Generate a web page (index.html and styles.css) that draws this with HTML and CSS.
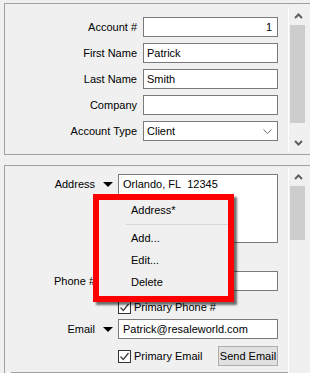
FILE: index.html
```html
<!DOCTYPE html>
<html>
<head>
<meta charset="utf-8">
<link rel="stylesheet" href="styles.css">
</head>
<body>
<div class="panel panel-top">
  <div class="form">
    <label class="lbl">Account #</label>
    <div class="field num">1</div>
    <label class="lbl">First Name</label>
    <div class="field">Patrick</div>
    <label class="lbl">Last Name</label>
    <div class="field">Smith</div>
    <label class="lbl">Company</label>
    <div class="field"></div>
    <label class="lbl">Account Type</label>
    <div class="field combo"><span>Client</span>
      <svg class="combo-arrow" width="9" height="5" viewBox="0 0 9 5"><path d="M0.5 0.5 L4.5 4.5 L8.5 0.5" fill="none" stroke="#6d6d6d" stroke-width="1"/></svg>
    </div>
  </div>
  <div class="vscroll vscroll-top">
    <div class="sbtn"><svg width="9" height="6" viewBox="0 0 9 6"><path d="M1 5 L4.5 1.5 L8 5" fill="none" stroke="#606060" stroke-width="2"/></svg></div>
    <div class="thumb thumb-top"></div>
    <div class="track"></div>
    <div class="sbtn"><svg width="9" height="6" viewBox="0 0 9 6"><path d="M1 1 L4.5 4.5 L8 1" fill="none" stroke="#606060" stroke-width="2"/></svg></div>
  </div>
</div>

<div class="panel panel-bottom">
  <div class="form2">
    <div class="row row-address">
      <span class="lbl2">Address</span>
      <span class="drop"></span>
      <div class="area">Orlando, FL&nbsp; 12345</div>
    </div>
    <div class="row row-phone">
      <span class="lbl2">Phone #</span>
      <span class="drop"></span>
      <div class="field2"></div>
    </div>
    <div class="row row-check1">
      <span class="lbl2"></span>
      <span class="spacer"></span>
      <label class="check"><span class="box"><svg width="11" height="11" viewBox="0 0 11 11"><path d="M1.5 5.5 L4.3 8.5 L9.5 2" fill="none" stroke="#404040" stroke-width="1.3"/></svg></span>Primary Phone #</label>
    </div>
    <div class="row row-email">
      <span class="lbl2">Email</span>
      <span class="drop"></span>
      <div class="field2">Patrick@resaleworld.com</div>
    </div>
    <div class="row row-check2">
      <span class="lbl2"></span>
      <span class="spacer"></span>
      <label class="check"><span class="box"><svg width="11" height="11" viewBox="0 0 11 11"><path d="M1.5 5.5 L4.3 8.5 L9.5 2" fill="none" stroke="#404040" stroke-width="1.3"/></svg></span>Primary Email</label>
      <button class="btn">Send Email</button>
    </div>
    <div class="bottom-line"></div>
  </div>
  <div class="vscroll vscroll-bottom">
    <div class="sbtn"><svg width="9" height="6" viewBox="0 0 9 6"><path d="M1 5 L4.5 1.5 L8 5" fill="none" stroke="#606060" stroke-width="2"/></svg></div>
    <div class="thumb thumb-bottom"></div>
    <div class="track"></div>
  </div>

  <div class="menu">
    <div class="menu-inner">
      <div class="mi">Address*</div>
      <div class="msep"></div>
      <div class="mi">Add...</div>
      <div class="mi">Edit...</div>
      <div class="mi">Delete</div>
    </div>
  </div>
</div>
</body>
</html>
```
FILE: styles.css
```css
* { box-sizing: border-box; }
html, body { margin: 0; padding: 0; }
body {
  width: 310px;
  height: 373px;
  overflow: hidden;
  background: #f0f0f0;
  font-family: "Liberation Sans", Arial, sans-serif;
  font-size: 11px;
  color: #000;
}

.panel {
  display: flex;
  margin-left: 4px;
  width: 320px;
  border: 1px solid #a0a0a0;
  border-right: none;
}
.panel-top {
  margin-top: 3px;
  height: 152px;
}
.panel-bottom {
  position: relative;
  margin-top: 10px;
  height: 220px;
  border-bottom: none;
}

/* top form */
.form {
  width: 283px;
  display: grid;
  grid-template-columns: 132px 135px;
  grid-auto-rows: 20px;
  column-gap: 6px;
  row-gap: 6px;
  padding-top: 13px;
  align-content: start;
}
.lbl {
  justify-self: end;
  align-self: center;
  white-space: nowrap;
}
.field {
  background: #fff;
  border: 1px solid #7a7a7a;
  height: 20px;
  line-height: 18px;
  padding: 0 3px;
  white-space: nowrap;
}
.field.num { text-align: right; padding-right: 5px; }
.combo {
  display: flex;
  justify-content: space-between;
  align-items: center;
  padding-right: 5px;
}

/* scrollbars */
.vscroll {
  width: 18px;
  border-left: 1px solid #fff;
  display: flex;
  flex-direction: column;
  padding-left: 1px;
}
.vscroll-top {
  margin-top: 3px;
  height: 144px;
}
.vscroll-bottom {
  margin-top: 2px;
  height: 218px;
}
.sbtn {
  height: 17px;
  display: flex;
  align-items: center;
  justify-content: center;
}
.thumb {
  background: #cdcdcd;
  width: 15px;
}
.thumb-top { height: 98px; margin-top: 1px; }
.thumb-bottom { height: 54px; margin-top: 1px; }
.track { flex: 1; }

/* bottom form */
.form2 {
  width: 283px;
  padding-top: 8px;
  display: flex;
  flex-direction: column;
}
.row {
  display: flex;
  align-items: center;
}
.lbl2 {
  width: 90px;
  text-align: right;
  white-space: nowrap;
}
.drop {
  width: 0;
  height: 0;
  margin-left: 8px;
  margin-right: 5px;
  border-left: 5px solid transparent;
  border-right: 5px solid transparent;
  border-top: 5px solid #000;
}
.spacer { width: 23px; }
.row-address { align-items: flex-start; }
.row-address .lbl2 { margin-top: 4px; }
.row-address .drop { margin-top: 8px; }
.area {
  width: 160px;
  height: 69px;
  background: #fff;
  border: 1px solid #7a7a7a;
  padding: 3px 4px;
}
.field2 {
  width: 160px;
  height: 20px;
  background: #fff;
  border: 1px solid #7a7a7a;
  line-height: 18px;
  padding: 0 4px;
}
.row-phone { margin-top: 28px; }
.row-check1 { margin-top: 10px; height: 12px; }
.row-email { margin-top: 6px; }
.row-check2 { margin-top: 7px; height: 20px; }
.check {
  display: flex;
  align-items: center;
  white-space: nowrap;
}
.box {
  width: 13px;
  height: 13px;
  background: #fff;
  border: 1px solid #333;
  margin-right: 3px;
  display: flex;
  align-items: center;
  justify-content: center;
}
.btn {
  margin-left: auto;
  margin-right: 10px;
  width: 60px;
  height: 20px;
  background: #e1e1e1;
  border: 1px solid #adadad;
  font-family: inherit;
  font-size: 11px;
  color: #000;
  padding: 0;
}
.bottom-line {
  margin-top: 6px;
  margin-left: 6px;
  border-top: 1px solid #a0a0a0;
  width: 278px;
}

/* context menu */
.menu {
  position: absolute;
  left: 88px;
  top: 28px;
  width: 141px;
  height: 108px;
  border: 6px solid #ff0000;
  background: #f0f0f0;
  box-shadow: 3px 3px 2px rgba(0,0,0,0.55);
}
.menu-inner {
  padding-left: 32px;
  padding-right: 0;
}
.mi {
  height: 22px;
  line-height: 22px;
  font-size: 11px;
}
.mi:first-child { height: 21px; line-height: 21px; }
.msep {
  height: 6px;
  margin-left: -5px;
  margin-right: 0;
  position: relative;
}
.msep::after {
  content: "";
  position: absolute;
  left: 0;
  right: 0;
  top: 3px;
  border-top: 1px solid #d7d7d7;
}
```
